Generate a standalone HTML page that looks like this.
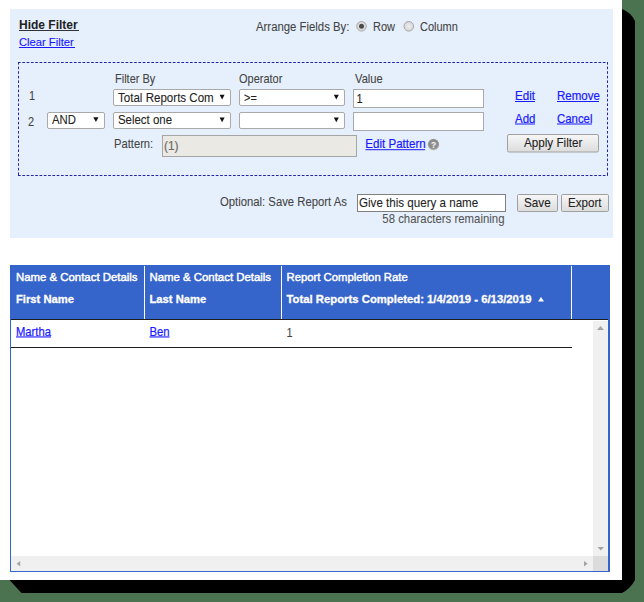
<!DOCTYPE html>
<html><head><meta charset="utf-8">
<style>
html,body{margin:0;padding:0;width:644px;height:602px;overflow:hidden;background:#4b7350;}
svg{display:block;}
svg{font-family:"Liberation Sans",sans-serif;}
</style></head><body>
<svg width="644" height="602" viewBox="0 0 644 602" font-size="11">
<defs>
<linearGradient id="btn" x1="0" y1="0" x2="0" y2="1">
<stop offset="0" stop-color="#f7f7f7"/><stop offset="1" stop-color="#dcdcdc"/>
</linearGradient>
<radialGradient id="help" cx="0.5" cy="0.45" r="0.5">
<stop offset="0" stop-color="#9c9c9c"/><stop offset="0.7" stop-color="#8a8a8a"/><stop offset="0.9" stop-color="#a0a0a0"/><stop offset="1" stop-color="#c4c4c4"/>
</radialGradient>
<radialGradient id="rad" cx="0.5" cy="0.5" r="0.5">
<stop offset="0" stop-color="#f0f0f0"/><stop offset="1" stop-color="#d4d4d4"/>
</radialGradient>
</defs>
<!-- shadow -->
<path d="M612,0 L622,9 Q631,12.5 635,21 L635,580 Q630.5,588.5 622,593 L21.5,593 L9.5,580 Z" fill="#000"/>
<!-- white card -->
<rect x="0" y="0" width="622" height="580" fill="#fff"/>
<!-- filter panel -->
<rect x="10" y="9" width="603" height="229" fill="#e6f0fd"/>
<text x="19" y="29" font-weight="bold" font-size="12" fill="#222">Hide Filter</text>
<rect x="19" y="30" width="60" height="1" fill="#333"/>
<text x="19" y="46" font-size="11.2" fill="#1a1aff" stroke="#1a1aff" stroke-width="0.15">Clear Filter</text>
<rect x="19" y="47" width="56" height="1" fill="#1a1aff"/>

<text x="256" y="30.8" font-size="11.37" fill="#444" stroke="#444" stroke-width="0.08" transform="matrix(1 0 0 1.1 0 -3.080)">Arrange Fields By:</text>
<circle cx="361.5" cy="26.3" r="4.8" fill="url(#rad)" stroke="#a9a9a9" stroke-width="1"/>
<circle cx="361.5" cy="26.3" r="2.5" fill="#4a4a4a"/>
<text x="373" y="30.8" fill="#444" stroke="#444" stroke-width="0.08" transform="matrix(1 0 0 1.1 0 -3.080)">Row</text>
<circle cx="408.8" cy="26.3" r="4.8" fill="url(#rad)" stroke="#a9a9a9" stroke-width="1"/>
<text x="420" y="30.8" fill="#444" stroke="#444" stroke-width="0.08" transform="matrix(1 0 0 1.1 0 -3.080)">Column</text>

<!-- dashed box -->
<g stroke="#2424a6" stroke-width="1" fill="none">
<path d="M18,62.5 H608" stroke-dasharray="2.7 1.6"/><path d="M18.5,62 V176" stroke-dasharray="2.6 2"/><path d="M607.5,62 V176" stroke-dasharray="2.6 2"/><path d="M18,175.5 H608" stroke-dasharray="2.7 1.6"/>
</g>

<text x="115" y="82.9" fill="#444" stroke="#444" stroke-width="0.08" transform="matrix(1 0 0 1.1 0 -8.290)">Filter By</text>
<text x="239" y="82.9" fill="#444" stroke="#444" stroke-width="0.08" transform="matrix(1 0 0 1.1 0 -8.290)">Operator</text>
<text x="355" y="82.9" font-size="11.2" fill="#444" stroke="#444" stroke-width="0.08" transform="matrix(1 0 0 1.1 0 -8.290)">Value</text>

<text x="29" y="100.1" fill="#444" stroke="#444" stroke-width="0.08" transform="matrix(1 0 0 1.1 0 -10.010)">1</text>
<text x="28" y="125.7" fill="#444" stroke="#444" stroke-width="0.08" transform="matrix(1 0 0 1.1 0 -12.570)">2</text>

<!-- selects -->
<rect x="47.5" y="112.5" width="57" height="16" rx="1.5" fill="#fff" stroke="#a9a9a9"/>
<text x="52" y="123.9" font-size="11.3" fill="#222" stroke="#222" stroke-width="0.08" transform="matrix(1 0 0 1.1 0 -12.390)">AND</text>
<path d="M93.3,117.2 h5.2 l-2.6,4.8 z" fill="#111"/>

<rect x="113.5" y="89.5" width="117" height="16" rx="1.5" fill="#fff" stroke="#a9a9a9"/>
<text x="118" y="101.7" font-size="11.57" fill="#222" stroke="#222" stroke-width="0.08" transform="matrix(1 0 0 1.1 0 -10.170)">Total Reports Com</text>
<path d="M219.6,94.8 h5 l-2.5,4.8 z" fill="#111"/>
<rect x="113.5" y="112.5" width="117" height="16" rx="1.5" fill="#fff" stroke="#a9a9a9"/>
<text x="118" y="124.5" font-size="11.45" fill="#222" stroke="#222" stroke-width="0.08" transform="matrix(1 0 0 1.1 0 -12.450)">Select one</text>
<path d="M219.6,117.5 h5 l-2.5,4.8 z" fill="#111"/>

<rect x="239.5" y="89.5" width="105" height="16" rx="1.5" fill="#fff" stroke="#a9a9a9"/>
<text x="244" y="102.2" fill="#222" stroke="#222" stroke-width="0.08" transform="matrix(1 0 0 1.1 0 -10.220)">&gt;=</text>
<path d="M333.8,94.8 h5 l-2.5,4.8 z" fill="#111"/>
<rect x="239.5" y="112.5" width="105" height="16" rx="1.5" fill="#fff" stroke="#a9a9a9"/>
<path d="M333.8,117.5 h5 l-2.5,4.8 z" fill="#111"/>

<!-- value inputs -->
<rect x="353.5" y="89.5" width="130" height="18" fill="#fff" stroke="#a9a9a9"/>
<text x="356.4" y="103" fill="#222" stroke="#222" stroke-width="0.08" transform="matrix(1 0 0 1.1 0 -10.300)">1</text>
<rect x="353.5" y="112.5" width="130" height="18" fill="#fff" stroke="#a9a9a9"/>

<text x="515" y="100" font-size="11.6" fill="#1a1aff" stroke="#1a1aff" stroke-width="0.2" transform="matrix(1 0 0 1.1 0 -10.000)">Edit</text>
<rect x="515" y="101" width="20" height="1" fill="#1a1aff"/>
<text x="557" y="100" font-size="11.5" fill="#1a1aff" stroke="#1a1aff" stroke-width="0.2" transform="matrix(1 0 0 1.1 0 -10.000)">Remove</text>
<rect x="557" y="101" width="42" height="1" fill="#1a1aff"/>
<text x="515" y="123.1" font-size="11.5" fill="#1a1aff" stroke="#1a1aff" stroke-width="0.2" transform="matrix(1 0 0 1.1 0 -12.310)">Add</text>
<rect x="515" y="123.5" width="20" height="1" fill="#1a1aff"/>
<text x="557" y="123.1" font-size="11.4" fill="#1a1aff" stroke="#1a1aff" stroke-width="0.2" transform="matrix(1 0 0 1.1 0 -12.310)">Cancel</text>
<rect x="557" y="123.5" width="35" height="1" fill="#1a1aff"/>

<text x="114" y="148" font-size="11.2" fill="#444" stroke="#444" stroke-width="0.08" transform="matrix(1 0 0 1.1 0 -14.800)">Pattern:</text>
<rect x="162.5" y="135.5" width="194" height="21" fill="#ebe9e3" stroke="#a6a6a6"/>
<text x="164" y="150.3" font-size="11.9" fill="#6d6d6d" stroke="#6d6d6d" stroke-width="0.2" transform="matrix(1 0 0 1.1 0 -15.030)">(1)</text>
<text x="365.2" y="148.3" font-size="11.6" fill="#1a1aff" stroke="#1a1aff" stroke-width="0.2" transform="matrix(1 0 0 1.1 0 -14.830)">Edit Pattern</text>
<rect x="365.5" y="149.2" width="59.5" height="1" fill="#1a1aff"/>
<circle cx="433.5" cy="144.6" r="5.8" fill="url(#help)"/>
<text x="433.6" y="147.9" font-size="8.5" font-weight="bold" fill="#f4f4f4" text-anchor="middle">?</text>

<rect x="507.5" y="134.5" width="91" height="17.5" rx="1.5" fill="url(#btn)" stroke="#a0a0a0"/>
<text x="524" y="147.5" font-size="11.7" fill="#222" stroke="#222" stroke-width="0.08" transform="matrix(1 0 0 1.1 0 -14.750)">Apply Filter</text>

<text x="220" y="206" font-size="11.32" fill="#444" stroke="#444" stroke-width="0.08" transform="matrix(1 0 0 1.1 0 -20.600)">Optional: Save Report As</text>
<rect x="357.5" y="194.5" width="148" height="17" fill="#fff" stroke="#7f7f7f"/>
<text x="359" y="207.4" font-size="11.6" fill="#222" stroke="#222" stroke-width="0.08" transform="matrix(1 0 0 1.1 0 -20.740)">Give this query a name</text>
<text x="504.5" y="223.2" font-size="11.4" fill="#555" text-anchor="end" stroke="#555" stroke-width="0.08" transform="matrix(1 0 0 1.1 0 -22.320)">58 characters remaining</text>
<rect x="517.5" y="194.5" width="40" height="17" rx="1.2" fill="url(#btn)" stroke="#a0a0a0"/>
<text x="524" y="207.3" font-size="11.75" fill="#222" stroke="#222" stroke-width="0.08" transform="matrix(1 0 0 1.1 0 -20.730)">Save</text>
<rect x="561.5" y="194.5" width="47" height="17" rx="1.2" fill="url(#btn)" stroke="#a0a0a0"/>
<text x="568" y="207.3" font-size="11.6" fill="#222" stroke="#222" stroke-width="0.08" transform="matrix(1 0 0 1.1 0 -20.730)">Export</text>

<!-- table -->
<rect x="10" y="265" width="600" height="307" fill="#3564ca"/>
<rect x="11" y="320" width="597" height="251" fill="#fff"/>
<rect x="11" y="319" width="597" height="1" fill="#1e1e1e"/>
<rect x="144" y="266" width="1" height="53" fill="#fff"/>
<rect x="281" y="266" width="1" height="53" fill="#fff"/>
<rect x="571" y="266" width="1" height="53" fill="#fff"/>
<text x="16" y="281" font-size="11.4" fill="#fff" stroke="#fff" stroke-width="0.45">Name &amp; Contact Details</text>
<text x="16" y="303" font-size="11.23" fill="#fff" stroke="#fff" stroke-width="0.3" font-weight="bold">First Name</text>
<text x="149.5" y="281" font-size="11.4" fill="#fff" stroke="#fff" stroke-width="0.45">Name &amp; Contact Details</text>
<text x="149.5" y="303" font-size="11.23" fill="#fff" stroke="#fff" stroke-width="0.3" font-weight="bold">Last Name</text>
<text x="286.5" y="281" font-size="11.3" fill="#fff" stroke="#fff" stroke-width="0.45">Report Completion Rate</text>
<text x="286.5" y="303" font-size="11.32" fill="#fff" stroke="#fff" stroke-width="0.3" font-weight="bold">Total Reports Completed: 1/4/2019 - 6/13/2019</text>
<path d="M538,301.5 l3,-4.5 l3,4.5 z" fill="#fff"/>

<text x="16" y="335.6" font-size="11.25" fill="#1a1aff" stroke="#1a1aff" stroke-width="0.2" transform="matrix(1 0 0 1.1 0 -33.560)">Martha</text>
<rect x="16" y="336.4" width="35" height="1.1" fill="#1a1aff"/>
<text x="149.5" y="335.6" font-size="11.35" fill="#1a1aff" stroke="#1a1aff" stroke-width="0.2" transform="matrix(1 0 0 1.1 0 -33.560)">Ben</text>
<rect x="149.5" y="336.4" width="20" height="1.1" fill="#1a1aff"/>
<text x="286.6" y="336.6" fill="#444" stroke="#444" stroke-width="0.05" transform="matrix(1 0 0 1.1 0 -33.660)">1</text>
<rect x="11" y="347" width="561" height="1" fill="#1e1e1e"/>

<!-- scrollbars -->
<rect x="593" y="321" width="15" height="235" fill="#f0f0f0"/>
<rect x="11" y="556" width="582" height="15" fill="#f0f0f0"/>
<rect x="593" y="556" width="15" height="15" fill="#dcdcdc"/>
<path d="M597,330 l3.5,-4 l3.5,4 z" fill="#a3a3a3"/>
<path d="M597.5,547 l3.25,3.5 l3.25,-3.5 z" fill="#a3a3a3"/>
<path d="M20.2,561 l-3.6,2.8 l3.6,2.8 z" fill="#a3a3a3"/>
<path d="M584,561 l3.6,2.8 l-3.6,2.8 z" fill="#a3a3a3"/>
</svg>
</body></html>
